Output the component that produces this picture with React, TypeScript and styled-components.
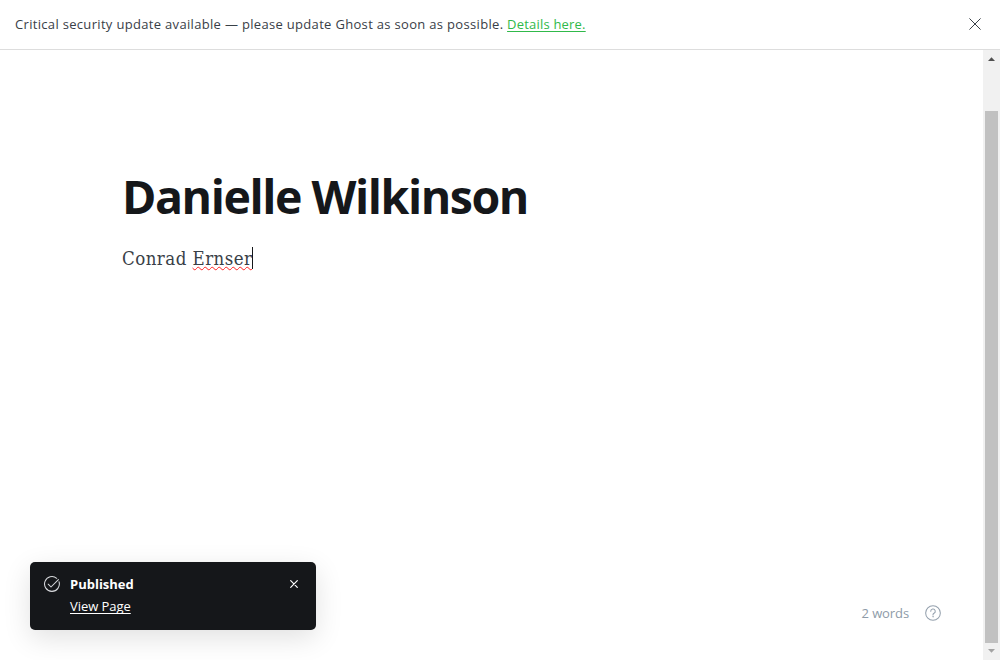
import React from 'react';
import styled, { createGlobalStyle } from 'styled-components';

const GlobalStyle = createGlobalStyle`
  * { box-sizing: border-box; }
  body {
    margin: 0;
    background: #fff;
    color: #394047;
    font-family: "Open Sans", "Noto Sans", sans-serif;
    overflow: hidden;
  }
`;

const Screen = styled.div`
  display: flex;
  flex-direction: column;
  height: 660px;
  width: 1000px;
`;

const AlertBar = styled.header`
  display: flex;
  align-items: center;
  justify-content: space-between;
  flex: none;
  height: 50px;
  padding: 0 19px 1px 15px;
  border-bottom: 1px solid #dddddd;
`;

const AlertText = styled.p`
  margin: 0;
  font-size: 13px;
  line-height: 20px;
  letter-spacing: 0.32px;
  white-space: nowrap;
`;

const AlertLink = styled.a`
  color: #30b94a;
  letter-spacing: 0.2px;
  text-decoration: underline;
  text-decoration-skip-ink: none;
  text-underline-offset: 2px;
`;

const IconButton = styled.button`
  display: flex;
  padding: 0;
  border: 0;
  background: none;
  color: inherit;
`;

const Workspace = styled.div`
  display: flex;
  flex: 1;
  min-height: 0;
`;

const Editor = styled.main`
  display: flex;
  flex-direction: column;
  justify-content: space-between;
  flex: 1;
  padding: 114px 42px 37px 122px;
`;

const Title = styled.h1`
  margin: 0;
  color: #15171a;
  font-size: 46.5px;
  font-weight: 700;
  line-height: 64px;
  letter-spacing: -1.45px;
  white-space: nowrap;
`;

const Body = styled.p`
  display: flex;
  align-items: flex-start;
  margin: 16px 0 0;
  font-family: "DejaVu Serif Condensed", "DejaVu Serif", serif;
  font-stretch: condensed;
  font-size: 18.5px;
  line-height: 30px;
  letter-spacing: 0.46px;
  white-space: pre;
`;

const Misspelled = styled.span`
  text-decoration: underline wavy #f22 1px;
  text-decoration-skip-ink: none;
  text-underline-offset: 1px;
`;

const Caret = styled.span`
  width: 1px;
  height: 22px;
  margin-top: 3px;
  background: #15171a;
`;

const Status = styled.footer`
  display: flex;
  align-items: center;
  align-self: flex-end;
  gap: 16px;
  color: #8e9ba8;
  font-size: 13px;
  line-height: 20px;
  letter-spacing: -0.1px;
`;

const Scrollbar = styled.div`
  display: flex;
  flex-direction: column;
  align-items: center;
  width: 17px;
  background: #f1f1f1;
`;

const ScrollArrow = styled.svg`
  display: block;
  flex: none;
  width: 17px;
  height: 17px;
`;

const ScrollThumb = styled.div`
  width: 13px;
  height: 532px;
  margin-top: 44px;
  background: #c1c1c1;
`;

const Toast = styled.aside`
  position: absolute;
  left: 30px;
  top: 562px;
  display: flex;
  align-items: flex-start;
  width: 286px;
  height: 68px;
  padding: 12px 17px 0 14px;
  border-radius: 5px;
  background: #15171a;
  color: #fff;
  box-shadow: 0 0 1px rgba(0, 0, 0, 0.04), 0 8px 28px rgba(0, 0, 0, 0.12);
`;

const ToastIcon = styled.svg`
  flex: none;
  margin-top: 2px;
`;

const ToastContent = styled.div`
  display: flex;
  flex: 1;
  flex-direction: column;
  align-items: flex-start;
  margin-left: 10px;
  font-size: 13px;
  line-height: 20px;
`;

const ToastTitle = styled.strong`
  font-weight: 700;
  letter-spacing: 0;
`;

const ToastLink = styled.a`
  margin-top: 2px;
  font-size: 13px;
  letter-spacing: -0.05px;
  text-decoration: underline;
  text-decoration-skip-ink: none;
  text-underline-offset: 2px;
`;

const ToastClose = styled(IconButton)`
  margin: 6px 1px 0 0;
`;

const Cross = ({ size, weight }: { size: number; weight: number }) => (
  <svg width={size} height={size} viewBox={`0 0 ${size} ${size}`} fill="none" stroke="currentColor" strokeWidth={weight} strokeLinecap="round">
    <path d={`M.7 .7 ${size - 0.7} ${size - 0.7}M${size - 0.7} .7 .7 ${size - 0.7}`} />
  </svg>
);

export default function App() {
  return (
    <>
      <GlobalStyle />
      <Screen>
        <AlertBar>
          <AlertText>
            Critical security update available — please update Ghost as soon as possible. <AlertLink>Details here.</AlertLink>
          </AlertText>
          <IconButton aria-label="Close alert">
            <Cross size={12} weight={1} />
          </IconButton>
        </AlertBar>
        <Workspace>
          <Editor>
            <div>
              <Title>Danielle Wilkinson</Title>
              <Body>
                <span>Conrad </span>
                <Misspelled>Ernser</Misspelled>
                <Caret />
              </Body>
            </div>
            <Status>
              <span>2 words</span>
              <svg width="16" height="16" viewBox="0 0 17 17" fill="none" stroke="#94a0ad" strokeWidth="1.1" strokeLinecap="round">
                <circle cx="8.5" cy="8.5" r="7.8" />
                <path d="M6.1 6.7a2.4 2.4 0 1 1 3.5 2.1c-.8.4-1.1.8-1.1 1.5v.2" />
                <circle cx="8.5" cy="12.5" r=".35" fill="#94a0ad" strokeWidth=".6" />
              </svg>
            </Status>
          </Editor>
          <Scrollbar>
            <ScrollArrow viewBox="0 0 17 17">
              <path d="M5 11 8.5 7.2 12 11z" fill="#505050" />
            </ScrollArrow>
            <ScrollThumb />
            <ScrollArrow viewBox="0 0 17 17">
              <path d="M5 6 8.5 9.8 12 6z" fill="#a3a3a3" />
            </ScrollArrow>
          </Scrollbar>
        </Workspace>
      </Screen>
      <Toast>
        <ToastIcon width="16" height="16" viewBox="0 0 16 16" fill="none" stroke="#d8dadd" strokeWidth="1.05" strokeLinecap="round" strokeLinejoin="round">
          <path d="M15 5.7A7.4 7.4 0 1 1 12.7 2.3" />
          <path d="M4.2 8.2 7 11 14.4 3.6" />
        </ToastIcon>
        <ToastContent>
          <ToastTitle>Published</ToastTitle>
          <ToastLink>View Page</ToastLink>
        </ToastContent>
        <ToastClose aria-label="Dismiss">
          <Cross size={8} weight={1.2} />
        </ToastClose>
      </Toast>
    </>
  );
}
